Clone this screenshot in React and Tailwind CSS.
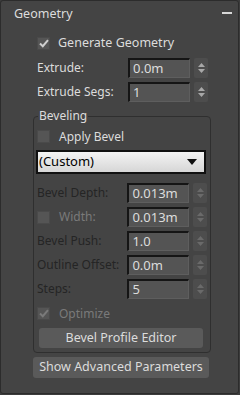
const font = { fontFamily: '"Noto Sans", "DejaVu Sans", sans-serif' };

function Check({ checked, disabled }) {
  return (
    <div className="w-[13px] h-[13px] bg-[#555555] border border-[#4a4a4a] flex items-center justify-center shrink-0">
      {checked && (
        <svg width="10" height="9" viewBox="0 0 10 9">
          <path d="M1 4.5 L3.8 7.2 L9 1.2" fill="none" stroke={disabled ? "#7a7a7a" : "#cfcfcf"} strokeWidth="2" />
        </svg>
      )}
    </div>
  );
}

function Spinner({ dim }) {
  const c = dim ? "#6a6a6a" : "#a8a8a8";
  return (
    <div className="w-[14px] h-[20px] bg-[#4d4d4d] rounded-[2px] flex flex-col items-center justify-center gap-[2px]">
      <svg width="7" height="4" viewBox="0 0 7 4"><path d="M0 4 L3.5 0 L7 4 Z" fill={c} /></svg>
      <svg width="7" height="4" viewBox="0 0 7 4"><path d="M0 0 L3.5 4 L7 0 Z" fill={c} /></svg>
    </div>
  );
}

function Field({ label, value, labelClass = "text-[#dcdcdc]", dim, check }) {
  return (
    <div className="flex items-center h-[20px]">
      <div className={`w-[91px] flex items-center gap-[9px] whitespace-nowrap ${labelClass}`}>
        {check}
        <span>{label}</span>
      </div>
      <div className="w-[62px] h-[20px] bg-[#545454] border-t-2 border-l-2 border-[#151515] border-r border-b border-r-[#5e5e5e] border-b-[#5e5e5e] pl-[3px] text-[#dcdcdc] text-[13px] leading-[17px]">
        {value}
      </div>
      <div className="ml-[4px]">
        <Spinner dim={dim} />
      </div>
    </div>
  );
}

export default function App() {
  return (
    <div className="w-[240px] h-[395px] bg-[#3c3c3c] text-[12px]" style={font}>
      <div className="w-[239px] h-[394px] bg-[#444444] border border-[#2c2c2c] rounded-[3px] flex flex-col">
        <div className="h-[26px] flex items-center justify-between pl-[13px] pr-[6px] text-[#dcdcdc] text-[12.5px]">
          <span>Geometry</span>
          <div className="w-[10px] h-[2px] bg-[#d8d8d8] mb-[2px]" />
        </div>

        <div className="pl-[36px] flex flex-col">
          <div className="mt-[10px] h-[13px] flex items-center gap-[8px] text-[#dcdcdc] text-[12.5px]">
            <Check checked />
            <span>Generate Geometry</span>
          </div>
          <div className="mt-[8px] flex flex-col gap-[4px]">
            <Field label="Extrude:" value="0.0m" />
            <Field label="Extrude Segs:" value="1" />
          </div>
        </div>

        <div className="ml-[32px] mt-[14px] w-[178px] h-[237px] border border-[#2f2f2f] rounded-[4px] relative">
          <span className="absolute -top-[10px] left-[4px] px-[1px] bg-[#444444] text-[#dcdcdc] leading-[18px]">Beveling</span>
          <div className="pl-[3px] pr-[3px] flex flex-col">
            <div className="mt-[13px] h-[13px] flex items-center gap-[9px] text-[#dcdcdc]">
              <Check />
              <span>Apply Bevel</span>
            </div>
            <div className="mt-[7px] -ml-[1px] w-[170px] h-[24px] border-2 border-[#111111] bg-gradient-to-b from-[#f4f4f4] to-[#d6d6d6] flex items-center justify-between pl-[1px] pr-[7px] text-black text-[13px]">
              <span>(Custom)</span>
              <svg width="10" height="6" viewBox="0 0 10 6"><path d="M0 0 L10 0 L5 6 Z" fill="#111" /></svg>
            </div>
            <div className="mt-[9px] flex flex-col gap-[4px]">
              <Field label="Bevel Depth:" value="0.013m" labelClass="text-[#252525]" dim />
              <Field label="Width:" value="0.013m" labelClass="text-[#7a7a7a]" dim check={<Check />} />
              <Field label="Bevel Push:" value="1.0" labelClass="text-[#252525]" dim />
              <Field label="Outline Offset:" value="0.0m" labelClass="text-[#252525]" dim />
              <Field label="Steps:" value="5" labelClass="text-[#252525]" dim />
            </div>
            <div className="mt-[8px] h-[13px] flex items-center gap-[9px] text-[#7a7a7a]">
              <Check checked disabled />
              <span>Optimize</span>
            </div>
            <div className="mt-[8px] ml-[2px] w-[164px] h-[20px] rounded-[3px] bg-[#5a5a5a] flex items-center justify-center text-[#dcdcdc] text-[12.5px]">
              Bevel Profile Editor
            </div>
          </div>
        </div>

        <div className="ml-[32px] mt-[4px] w-[176px] h-[21px] rounded-[3px] bg-[#5a5a5a] flex items-center justify-center text-[#dcdcdc] text-[12.5px]">
          Show Advanced Parameters
        </div>
      </div>
    </div>
  );
}
